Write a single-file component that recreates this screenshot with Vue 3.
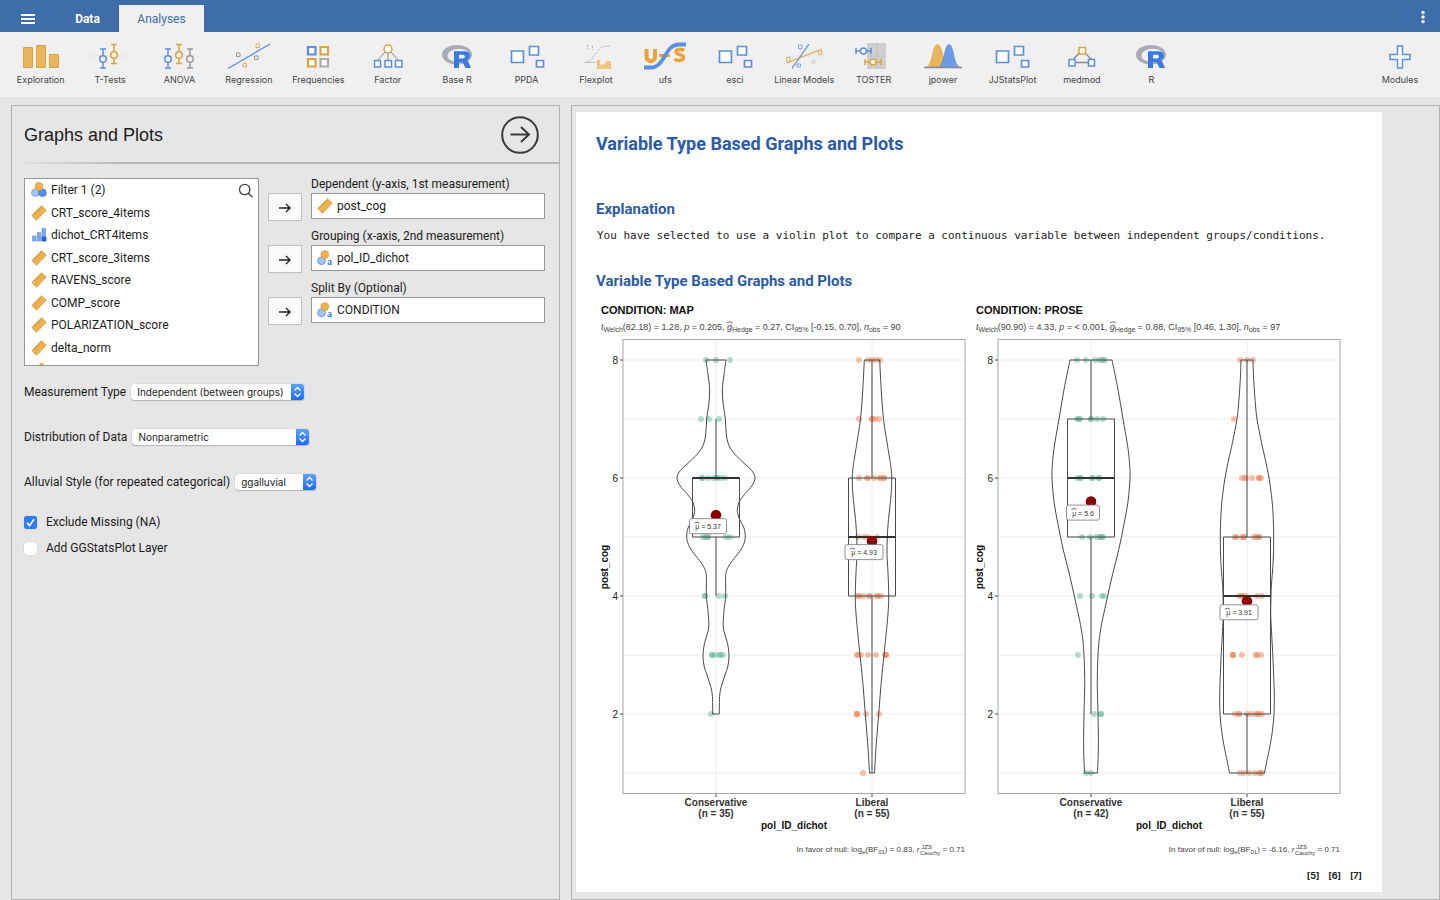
<script setup>
import { ref } from 'vue'

const tools = [
  { id: 'exploration', label: 'Exploration' },
  { id: 'ttests', label: 'T-Tests' },
  { id: 'anova', label: 'ANOVA' },
  { id: 'regression', label: 'Regression' },
  { id: 'frequencies', label: 'Frequencies' },
  { id: 'factor', label: 'Factor' },
  { id: 'r', label: 'Base R' },
  { id: 'squares', label: 'PPDA' },
  { id: 'flexplot', label: 'Flexplot' },
  { id: 'ufs', label: 'ufs' },
  { id: 'squares', label: 'esci' },
  { id: 'linear', label: 'Linear Models' },
  { id: 'toster', label: 'TOSTER' },
  { id: 'jpower', label: 'jpower' },
  { id: 'squares', label: 'JJStatsPlot' },
  { id: 'medmod', label: 'medmod' },
  { id: 'r', label: 'R' },
]

const variables = [
  { name: 'Filter 1 (2)', type: 'nominal' },
  { name: 'CRT_score_4items', type: 'scale' },
  { name: 'dichot_CRT4items', type: 'ordinal' },
  { name: 'CRT_score_3items', type: 'scale' },
  { name: 'RAVENS_score', type: 'scale' },
  { name: 'COMP_score', type: 'scale' },
  { name: 'POLARIZATION_score', type: 'scale' },
  { name: 'delta_norm', type: 'scale' },
  { name: '', type: 'scale' },
]

const targets = [
  { id: 'dep', label: 'Dependent (y-axis, 1st measurement)', value: 'post_cog', type: 'scale' },
  { id: 'group', label: 'Grouping (x-axis, 2nd measurement)', value: 'pol_ID_dichot', type: 'text' },
  { id: 'split', label: 'Split By (Optional)', value: 'CONDITION', type: 'text' },
]

const measurement = ref('Independent (between groups)')
const distribution = ref('Nonparametric')
const alluvial = ref('ggalluvial')
const excludeMissing = ref(true)
const addLayer = ref(false)

// Vertical position of a post_cog score inside a plot.
const yOf = (v) => 60 + (8 - v) * 59

// Mirrored density outline from [score, half width] pairs.
function violin(cx, profile) {
  const side = (sign, pts) => {
    const p = pts.map(([v, w]) => [cx + sign * w, yOf(v)])
    let d = ''
    for (let i = 0; i < p.length - 1; i++) {
      const a = p[Math.max(i - 1, 0)], b = p[i], c = p[i + 1], e = p[Math.min(i + 2, p.length - 1)]
      const n = [b[0] + (c[0] - a[0]) / 6, b[1] + (c[1] - a[1]) / 6, c[0] - (e[0] - b[0]) / 6, c[1] - (e[1] - b[1]) / 6, c[0], c[1]]
      d += 'C' + n.map((x) => x.toFixed(2)).join(' ')
    }
    return d
  }
  const [v0, w0] = profile[0]
  const [v1, w1] = profile[profile.length - 1]
  return `M${cx + w0} ${yOf(v0)}` + side(1, profile) + `L${cx - w1} ${yOf(v1)}` + side(-1, [...profile].reverse()) + 'Z'
}

const plots = [
  {
    title: 'CONDITION: MAP', t: '(82.18) = 1.28, ', p: ' = 0.205, ', g: ' = 0.27, CI', ci: ' [-0.15, 0.70], ', n: ' = 90', hat: 135, bf: ') = 0.83, ',
    groups: [
      {
        name: 'Conservative', n: 35, x: 124, color: '#66b99a', q: [5, 6, 6], lo: 4, hi: 7, mean: 5.37, labelW: 37,
        profile: [[8, 10], [7.75, 8], [7.5, 6.3], [7.25, 7.2], [7, 9.4], [6.75, 10.2], [6.55, 13], [6.4, 19], [6.25, 28], [6.12, 36], [6, 39], [5.87, 36], [5.72, 28.5], [5.6, 23.3], [5.45, 21.3], [5.3, 23.5], [5.15, 28], [5, 29.3], [4.87, 27.5], [4.75, 23.5], [4.6, 16.5], [4.45, 11], [4.3, 9.6], [4, 9.7], [3.8, 8.3], [3.55, 7.2], [3.4, 8], [3.2, 11.5], [3, 13], [2.82, 12], [2.65, 8.8], [2.45, 5], [2.3, 3.6], [2.1, 3.3], [2, 3.3]],
        dots: [[8, -10, 0, 14], [7, -15, -7, 3], [6, -14, -14, -8, -3, 1, 1, 5, 9], [5, -13, -10, -8, -8, 10, 14], [4, -11, -11, 3, 9], [3, -4, -4, -1, 4, 4, 7], [2, -5]],
      },
      {
        name: 'Liberal', n: 55, x: 280, color: '#ee8459', q: [4, 5, 6], lo: 1, hi: 8, mean: 4.93, labelW: 38,
        profile: [[8, 7.7], [7.5, 9.2], [7, 11.5], [6.5, 16], [6.2, 18.8], [6, 19.7], [5.7, 19], [5.3, 16.5], [5, 15.3], [4.7, 15], [4.4, 16], [4, 16.7], [3.7, 16], [3.3, 13.8], [3, 12], [2.5, 9], [2, 6.7], [1.5, 4.3], [1, 2.5]],
        dots: [[8, -13, -4, 0, 4, 8], [7, -13, 0, 0, 3, 7], [6, -13, -5, -4, 2, 8, 8, 12, 12], [5, -14, -8, -4, 5], [4, -14, -13, -9, -3, -2, 5, 6, 9], [3, -15, -14, -11, -4, 4, 13, 14, 14], [2, -15, -15, -15, -6, 7], [1, -9]],
      },
    ],
  },
  {
    title: 'CONDITION: PROSE', t: '(90.90) = 4.33, ', p: ' = < 0.001, ', g: ' = 0.88, CI', ci: ' [0.46, 1.30], ', n: ' = 97', hat: 143, bf: ') = -6.16, ',
    groups: [
      {
        name: 'Conservative', n: 42, x: 124, color: '#66b99a', q: [5, 6, 7], lo: 2, hi: 8, mean: 5.6, labelW: 33,
        profile: [[8, 21], [7.5, 27], [7, 32], [6.5, 37], [6.2, 38.7], [6, 39], [5.6, 37], [5.2, 32.8], [4.78, 27.7], [4.4, 22], [4, 16.7], [3.6, 11.5], [3.3, 8.5], [3, 7], [2.6, 6.3], [2.3, 6.5], [2, 7], [1.6, 7.4], [1.3, 7.2], [1, 6.5]],
        dots: [[8, -14, -5, 4, 8, 11, 12, 14], [7, -14, -12, -11, 0, 0, 6, 12], [6, -14, -11, -10, 1, 2, 8, 8], [5, -9, -1, 5, 9, 9, 11, 12], [4, -11, 1, 11, 13], [3, -13], [2, 3, 10, 10], [1, -5, 0]],
      },
      {
        name: 'Liberal', n: 55, x: 280, color: '#ee8459', q: [2, 4, 5], lo: 1, hi: 8, mean: 3.91, labelW: 38,
        profile: [[8, 6], [7.7, 6.6], [7.3, 8.2], [7, 10], [6.6, 14.5], [6.3, 18.5], [6, 22], [5.7, 24.5], [5.4, 26], [5, 26.7], [4.6, 26.2], [4.2, 24.5], [4, 24], [3.7, 23.7], [3.4, 24.5], [3, 25.8], [2.6, 26.8], [2.3, 27.3], [2, 27], [1.7, 25.3], [1.4, 22.3], [1.2, 19.8], [1, 17.5]],
        dots: [[8, -7, 0, 6], [7, -13], [6, -5, -2, -1, 5, 12, 12, 14], [5, -12, -11, -5, -3, -3, 7, 9, 12, 12], [4, -8, -5, -5, -1, 10, 15], [3, -14, -14, -14, -5, 9, 10, 14], [2, -12, -8, -8, 0, 4, 9, 10, 12, 15], [1, -7, -3, 2, 8, 13, 13, 15]],
      },
    ],
  },
]
</script>

<template>
  <div class="app">
    <header class="topbar">
      <button class="menu" aria-label="Menu">
        <svg width="16" height="12" viewBox="0 0 16 12"><path d="M1 2h14M1 6h14M1 10h14" stroke="#fff" stroke-width="2" /></svg>
      </button>
      <button class="tab data">Data</button>
      <button class="tab active">Analyses</button>
      <button class="more" aria-label="More">
        <svg width="6" height="14" viewBox="0 0 6 14" fill="#fff"><circle cx="3" cy="2.4" r="1.7" /><circle cx="3" cy="7" r="1.7" /><circle cx="3" cy="11.6" r="1.7" /></svg>
      </button>
    </header>

    <nav class="ribbon">
      <div class="tools">
        <button v-for="t in tools" :key="t.label" class="tool">
          <svg width="48" height="32" viewBox="0 0 48 32" fill="none">
            <g v-if="t.id === 'exploration'" fill="#e9b45c" stroke="#dfa23c">
              <path d="M6.500 7.500h9v20h-9zM19.500 5.500h9v22h-9zM32.500 14.500h9v13h-9z" />
            </g>
            <g v-else-if="t.id === 'ttests'">
              <path d="M3 16h42" stroke="#ddd" stroke-dasharray="2 1" />
              <path d="M14 9h6M17 9v19M14 28h6" stroke="#5b8fe0" stroke-width="1.500" />
              <circle cx="17" cy="19" r="3.300" fill="#f0f0f0" stroke="#5b8fe0" stroke-width="1.500" />
              <path d="M25 4.500h6M28 4.500v19M25 23.500h6" stroke="#dfa23c" stroke-width="1.500" />
              <circle cx="28" cy="15" r="3.300" fill="#f0f0f0" stroke="#dfa23c" stroke-width="1.500" />
            </g>
            <g v-else-if="t.id === 'anova'">
              <path d="M5 16h40" stroke="#ddd" stroke-dasharray="2 1" />
              <path d="M9 9h6M12 9v19M9 28h6" stroke="#5b8fe0" stroke-width="1.500" />
              <circle cx="12" cy="19" r="3.300" fill="#f0f0f0" stroke="#5b8fe0" stroke-width="1.500" />
              <path d="M20 4.500h6M23 4.500v19M20 23.500h6" stroke="#dfa23c" stroke-width="1.500" />
              <circle cx="23" cy="15" r="3.300" fill="#f0f0f0" stroke="#dfa23c" stroke-width="1.500" />
              <path d="M31 9h6M34 9v19M31 28h6" stroke="#999" stroke-width="1.500" />
              <circle cx="34" cy="19" r="3.300" fill="#f0f0f0" stroke="#999" stroke-width="1.500" />
            </g>
            <g v-else-if="t.id === 'regression'">
              <path d="M3 16h42" stroke="#ddd" stroke-dasharray="2 1" />
              <path d="M3 28.500L45 4" stroke="#5b8fe0" stroke-width="1.300" />
              <path d="M31 4h3.500v3.500H31zM18 23.500h3.500V27H18z" stroke="#e0ac56" />
              <path d="M11.500 13H15v3.500h-3.500zM29.500 16H33v3.500h-3.500z" stroke="#999" />
            </g>
            <g v-else-if="t.id === 'frequencies'" fill="#fff" stroke-width="2.200">
              <path d="M14 7h7.500v7.500H14z" stroke="#5b8fe0" /><path d="M26.500 7H34v7.500h-7.500z" stroke="#dfa23c" />
              <path d="M14 19h7.500v7.500H14z" stroke="#dfa23c" /><path d="M26.500 19H34v7.500h-7.500z" stroke="#aaa" />
            </g>
            <g v-else-if="t.id === 'factor'">
              <path d="M21 12l-7 8M24 13v7M27 12l7 8" stroke="#888" />
              <circle cx="24" cy="9" r="4" fill="#fff" stroke="#dfa23c" stroke-width="1.500" />
              <path d="M10.500 20.500h6v6.500h-6zM21 20.500h6.500v6.500H21zM31.500 20.500h6.500v6.500h-6.500z" fill="#fff" stroke="#5b8fe0" stroke-width="1.500" />
            </g>
            <g v-else-if="t.id === 'r'">
              <path fill-rule="evenodd" fill="#a9abb3" d="M24 5c8.300 0 15 4.300 15 9.800S32.300 24.500 24 24.500 9 20.300 9 14.800 15.700 5 24 5zM26 8.800c-6.400 0-11.400 3-11.400 7s5 6 11.400 6 10.500-2 10.500-6-4.100-7-10.500-7z" />
              <path fill-rule="evenodd" fill="#3b7be0" d="M21 11.200h10c4 0 6 1.600 6 4.600 0 2.400-1.400 3.800-3.400 4.400 1 .4 1.500 1 2 2L38 28h-5.500l-2.400-4.700c-.5-1-1-1.300-2-1.300H26v6H21zM26 14.700v3.700h3.500c1.600 0 2.400-.6 2.400-1.900 0-1.200-.8-1.800-2.400-1.800z" />
            </g>
            <g v-else-if="t.id === 'squares'" fill="#fff" stroke="#5b8fe0" stroke-width="1.700">
              <path d="M8.500 11h12v11.500h-12zM26.500 6.500h9v8.500h-9zM33.500 20.500h7V27h-7z" />
            </g>
            <g v-else-if="t.id === 'flexplot'">
              <path d="M15.500 5v4M20.500 6v4" stroke="#c8aa9a" stroke-dasharray="2 1" />
              <path d="M12 22.500h12M14 22c6-1 6-5 10-9s4-7 14-7" stroke="#c4c4c4" />
              <path d="M25 29v-9h3v4l3 1 4-4h4v8z" fill="#f0c67c" />
            </g>
            <g v-else-if="t.id === 'ufs'">
              <path d="M5.500 9v8c0 5.500 8.500 5.500 8.500 0V9" stroke="#e8a33a" stroke-width="4" />
              <path d="M18 15.500h11" stroke="#e8a33a" stroke-width="3" />
              <path d="M43 10.500c-3-2-8-1-8 1.500 0 3 7.500 2 7.500 5.500 0 3-6 4-9 1.500" stroke="#e8a33a" stroke-width="3.500" />
              <path d="M3 27.500h6c16 0 14-23 29-23h7" stroke="#5b8fe0" stroke-width="3.800" />
            </g>
            <g v-else-if="t.id === 'linear'">
              <path d="M6 16h38" stroke="#ddd" stroke-dasharray="2 1" />
              <path d="M7 23L42 9" stroke="#dfa84a" stroke-width="1.300" /><path d="M12 28.500L29 4" stroke="#5b8fe0" stroke-width="1.300" />
              <path d="M6.500 17.500H10V21H6.500zM38.500 11H42v3.500h-3.500z" stroke="#dfb265" />
              <path d="M18.500 5H22v3.500h-3.500zM17 24h3.500v3H17z" stroke="#7aa5e6" /><path d="M32 20h3v3h-3z" stroke="#ccc" />
            </g>
            <g v-else-if="t.id === 'toster'">
              <path d="M17 3h19v26H17z" fill="#cfcfcf" /><path d="M17 16h19M27 3v26" stroke="#bbb" stroke-dasharray="2 1" />
              <path d="M6 11h15M6 8v6M21 8v6" stroke="#5b8fe0" stroke-width="1.500" /><circle cx="13.500" cy="11" r="3" fill="#fff" stroke="#5b8fe0" stroke-width="1.500" />
              <path d="M15 22h16M15 19v6M31 19v6" stroke="#dfa23c" stroke-width="1.500" /><circle cx="23" cy="22" r="3" fill="#fff" stroke="#dfa23c" stroke-width="1.500" />
            </g>
            <g v-else-if="t.id === 'jpower'">
              <path d="M7 27.500c7-2 6-23 11.500-23s5 21 12 23z" fill="#e9b45c" stroke="#dfa23c" stroke-width=".6" />
              <path d="M19 27.500c7-2 6-23 11-23s4 21 11 23z" fill="#6a9be6" stroke="#4a80d0" stroke-width=".6" />
              <path d="M5 27.500h38" stroke="#888" stroke-width="1.300" />
            </g>
            <g v-else-if="t.id === 'medmod'">
              <path d="M21 13l-6 7M27 13l7 7M17 22.500h14" stroke="#888" stroke-width="1.300" />
              <path d="M21 7.500h6.500V14H21z" fill="#fff" stroke="#dfa23c" stroke-width="1.500" />
              <path d="M11 19.500h6V26h-6zM30.500 19.500h6V26h-6z" fill="#fff" stroke="#5b8fe0" stroke-width="1.500" />
            </g>
          </svg>
          <span>{{ t.label }}</span>
        </button>
      </div>
      <button class="tool modules">
        <svg width="48" height="32" viewBox="0 0 48 32"><path d="M21.500 6h5v8.500H34v5h-7.500V28h-5v-8.500H14v-5h7.500z" fill="#fff" stroke="#5b8fe0" stroke-width="1.500" /></svg>
        <span>Modules</span>
      </button>
    </nav>

    <main class="work">
      <section class="options">
        <div class="head">
          <h1>Graphs and Plots</h1>
          <button class="go" aria-label="Hide options">
            <svg width="40" height="40" viewBox="0 0 40 40" fill="none" stroke="#3a3a3a" stroke-width="2"><circle cx="20" cy="20" r="17.800" /><path d="M10.500 19.500h18M21 12l8 7.500-8 7.500" /></svg>
          </button>
        </div>

        <div class="assign">
          <div class="varbox">
            <ul>
              <li v-for="v in variables" :key="v.name">
                <svg width="16" height="16" viewBox="0 0 16 16">
                  <g v-if="v.type === 'scale'"><path d="M.8 10.500L10.500.8l4.700 4.400-9.700 10z" fill="#eeb150" stroke="#d9952f" stroke-width=".8" /><path d="M3.500 8l1.500 1.500M5.500 6l1 1M7.300 4.200l1.500 1.500M9.200 2.300l1 1" stroke="#b97c1e" stroke-width=".7" /></g>
                  <g v-else-if="v.type === 'nominal'"><circle cx="4.300" cy="10.800" r="3.800" fill="#a4c4f4" stroke="#6c98dc" stroke-width=".7" /><circle cx="11.500" cy="10.800" r="3.800" fill="#5b8fe0" stroke="#3f74c8" stroke-width=".7" /><circle cx="8" cy="4.500" r="3.900" fill="#eeb150" stroke="#d9952f" stroke-width=".7" /></g>
                  <g v-else><path d="M1.500 9h3.500v5H1.500zM6.200 5.500h3.500V14H6.200zM11 1.500h3.500V14H11z" fill="#7ca9ee" stroke="#5b8fe0" stroke-width=".6" /><rect x="10.500" y="9.500" width="5" height="5" rx="1" fill="#2f66c4" /></g>
                </svg>
                <span>{{ v.name }}</span>
              </li>
            </ul>
            <button class="search" aria-label="Search variables">
              <svg width="16" height="16" viewBox="0 0 16 16" fill="none" stroke="#444" stroke-width="1.300"><circle cx="6.700" cy="6.500" r="5.200" /><path d="M10.500 10.300l4 4" /></svg>
            </button>
          </div>

          <div class="targets">
            <div v-for="t in targets" :key="t.id" class="target">
              <button class="move" :aria-label="'Assign to ' + t.label">
                <svg width="14" height="14" viewBox="0 0 14 14" fill="none" stroke="#222" stroke-width="1.400"><path d="M1 8h10.500M8 4l4 4-4 4" /></svg>
              </button>
              <label :for="t.id">{{ t.label }}</label>
              <div class="field">
                <svg width="16" height="16" viewBox="0 0 16 16">
                  <g v-if="t.type === 'scale'"><path d="M.8 10.500L10.500.8l4.700 4.400-9.700 10z" fill="#eeb150" stroke="#d9952f" stroke-width=".8" /><path d="M3.500 8l1.500 1.500M5.500 6l1 1M7.300 4.200l1.500 1.500M9.200 2.300l1 1" stroke="#b97c1e" stroke-width=".7" /></g>
                  <g v-else><circle cx="4.500" cy="10.800" r="3.800" fill="#a4c4f4" stroke="#5b8fe0" stroke-width=".9" /><circle cx="7.800" cy="4.600" r="3.900" fill="#eeb150" stroke="#d9952f" stroke-width=".7" /><text x="10" y="15" class="type-a">a</text></g>
                </svg>
                <input :id="t.id" type="text" :value="t.value" readonly />
              </div>
            </div>
          </div>
        </div>

        <div class="choice">
          <label for="measure">Measurement Type</label>
          <span class="select w-measure">
            <select id="measure" v-model="measurement"><option>Independent (between groups)</option><option>Dependent (repeated)</option></select>
            <svg width="13" height="16" viewBox="0 0 13 16"><path d="M3.500 6.500l3-3 3 3M3.500 9.500l3 3 3-3" /></svg>
          </span>
        </div>
        <div class="choice">
          <label for="dist">Distribution of Data</label>
          <span class="select w-dist">
            <select id="dist" v-model="distribution"><option>Nonparametric</option><option>Parametric</option></select>
            <svg width="13" height="16" viewBox="0 0 13 16"><path d="M3.500 6.500l3-3 3 3M3.500 9.500l3 3 3-3" /></svg>
          </span>
        </div>
        <div class="choice">
          <label for="alluv">Alluvial Style (for repeated categorical)</label>
          <span class="select w-alluv">
            <select id="alluv" v-model="alluvial"><option>ggalluvial</option><option>easyalluvial</option></select>
            <svg width="13" height="16" viewBox="0 0 13 16"><path d="M3.500 6.500l3-3 3 3M3.500 9.500l3 3 3-3" /></svg>
          </span>
        </div>
        <div class="checks">
          <label><input v-model="excludeMissing" type="checkbox" />Exclude Missing (NA)</label>
          <label><input v-model="addLayer" type="checkbox" />Add GGStatsPlot Layer</label>
        </div>
      </section>

      <section class="results">
        <article class="paper">
          <h2>Variable Type Based Graphs and Plots</h2>
          <h3>Explanation</h3>
          <p class="mono">You have selected to use a violin plot to compare a continuous variable between independent groups/conditions.</p>
          <h3>Variable Type Based Graphs and Plots</h3>
          <div class="plots">
            <svg v-for="pl in plots" :key="pl.title" class="plot" viewBox="0 0 375 570">
              <text x="9" y="14" class="p-title">{{ pl.title }}</text>
              <text x="9" y="30" class="p-sub"><tspan class="i">t</tspan><tspan class="s" dy="2">Welch</tspan><tspan dy="-2">{{ pl.t }}</tspan><tspan class="i">p</tspan>{{ pl.p }}<tspan class="i">g</tspan><tspan class="s" dy="2">Hedge</tspan><tspan dy="-2">{{ pl.g }}</tspan><tspan class="s" dy="2">95%</tspan><tspan dy="-2">{{ pl.ci }}</tspan><tspan class="i">n</tspan><tspan class="s" dy="2">obs</tspan><tspan dy="-2">{{ pl.n }}</tspan></text>
              <path :d="`M${pl.hat} 23q3-3 6 0`" fill="none" stroke="#555" stroke-width=".8" />

              <path v-for="v in 8" :key="'g' + v" :d="`M31 ${yOf(v)}H373`" stroke="#ececec" />
              <path v-for="g in pl.groups" :key="'v' + g.name" :d="`M${g.x} 40V493`" stroke="#ececec" />

              <g v-for="g in pl.groups" :key="g.name">
                <template v-for="row in g.dots" :key="row[0]">
                  <circle v-for="(dx, i) in row.slice(1)" :key="i" :cx="g.x + dx" :cy="yOf(row[0])" r="3" :fill="g.color" fill-opacity=".5" />
                </template>
                <g fill="none" stroke="#4a4a4a">
                  <path :d="violin(g.x, g.profile)" />
                  <path :d="`M${g.x - 23.500} ${yOf(g.q[2])}h47V${yOf(g.q[0])}h-47zM${g.x} ${yOf(g.q[2])}V${yOf(g.hi)}M${g.x} ${yOf(g.q[0])}V${yOf(g.lo)}`" />
                  <path :d="`M${g.x - 23.500} ${yOf(g.q[1])}h47`" stroke="#333" stroke-width="2" />
                </g>
                <circle :cx="g.x" :cy="yOf(g.mean)" r="5.300" fill="#8b0000" />
                <rect :x="g.x - 8 - g.labelW / 2" :y="yOf(g.mean) + 3.500" :width="g.labelW" height="15" rx="2" fill="#fff" stroke="#777" stroke-width=".8" />
                <text :x="g.x - 8" :y="yOf(g.mean) + 14" text-anchor="middle" class="p-mean">μ = {{ g.mean }}</text>
                <path :d="`M${g.x - 3 - g.labelW / 2} ${yOf(g.mean) + 8}q2.500-2.500 5 0`" fill="none" stroke="#444" stroke-width=".8" />
                <path :d="`M${g.x} 493v4`" stroke="#444" />
                <text :x="g.x" y="506" text-anchor="middle" class="p-cat">{{ g.name }}</text>
                <text :x="g.x" y="517" text-anchor="middle" class="p-cat">(n = {{ g.n }})</text>
              </g>

              <rect x="31" y="39.500" width="342" height="454" fill="none" stroke="#a8a8a8" />
              <g v-for="v in [2, 4, 6, 8]" :key="v">
                <path :d="`M28 ${yOf(v)}h3`" stroke="#444" />
                <text x="26" :y="yOf(v) + 4" text-anchor="end" class="p-tick">{{ v }}</text>
              </g>
              <text transform="translate(16 267) rotate(-90)" text-anchor="middle" class="p-axis">post_cog</text>
              <text x="202" y="529" text-anchor="middle" class="p-axis">pol_ID_dichot</text>
              <text x="373" y="552" text-anchor="end" class="p-cap">In favor of null: log<tspan class="s" dy="2">e</tspan><tspan dy="-2">(BF</tspan><tspan class="s" dy="2">01</tspan><tspan dy="-2">{{ pl.bf }}</tspan><tspan class="i">r</tspan><tspan class="s i" dx="2" dy="-3">JZS</tspan><tspan class="s" dx="-12" dy="6">Cauchy</tspan><tspan dy="-3"> = 0.71</tspan></text>
            </svg>
          </div>
          <div class="refs"><a href="#5">[5]</a><a href="#6">[6]</a><a href="#7">[7]</a></div>
        </article>
      </section>
    </main>
  </div>
</template>

<style>
body { margin: 0; background: #e6e6e6; }
</style>

<style scoped>
.app { min-height: 100vh; display: flex; flex-direction: column; font-family: Roboto, "Liberation Sans", sans-serif; font-size: 12px; color: #1c1c1c; background: #e6e6e6; }
* { box-sizing: border-box; }
button { border: 0; padding: 0; background: none; font: inherit; color: inherit; }
h1, h2, h3, p, ul { margin: 0; padding: 0; }
svg { flex: none; }

.topbar { display: flex; align-items: flex-end; height: 32px; background: #3e6da9; }
.menu { width: 56px; height: 27px; }
.tab { height: 27px; font-size: 12px; color: #fff; }
.data { width: 63px; font-weight: 700; }
.active { width: 85px; background: #f0f0f0; color: #3e6da9; }
.more { width: 34px; height: 30px; margin-left: auto; }
.menu svg, .more svg { display: block; margin: auto; }

.ribbon { display: flex; justify-content: space-between; height: 67px; padding: 8px 5px 0 6px; background: #f0f0f0; border-bottom: 1px solid #dadada; }
.tools { display: grid; grid-template-columns: repeat(17, minmax(0, 1fr)); width: 1180px; }
.tool { display: flex; flex-direction: column; align-items: center; gap: 1px; font: 9px/13px Inter, sans-serif; color: #444; white-space: nowrap; }
.modules { width: 70px; }

.work { flex: 1; display: grid; grid-template-columns: 549px minmax(0, 1fr); gap: 11px; padding: 6px 0 0 11px; }
.options, .results { border: 1px solid #b2b2b2; }
.head { display: flex; justify-content: space-between; align-items: center; height: 58px; padding: 2px 19px 0 12px; border-bottom: 2px solid; border-image: linear-gradient(90deg, #e6e6e6, #b8b8b8 20%) 1; }
h1 { font: 400 18px "Liberation Sans", Arial, sans-serif; }
.go svg { display: block; }

.assign { display: flex; gap: 9px; padding: 14px 14px 0 12px; }
.varbox { position: relative; width: 235px; height: 188px; border: 1px solid #979797; background: #fff; overflow: hidden; }
.varbox ul { list-style: none; padding: 0 6px; }
.varbox li { display: flex; align-items: center; gap: 4px; height: 22px; margin-bottom: 1px; }
.varbox li:nth-child(even) { margin-bottom: 0; }
.search { position: absolute; top: 4px; right: 4px; }
.search svg { display: block; }
.targets { flex: 1; display: flex; flex-direction: column; }
.target { display: grid; grid-template: 15px 26px / 34px 1fr; column-gap: 9px; margin-bottom: 11px; }
.target label { grid-column: 2; grid-row: 1; line-height: 13px; }
.move { grid-column: 1; grid-row: 2; height: 28px; border: 1px solid #c0c0c0; background: #fafafa; }
.move svg { display: block; margin: auto; }
.field { grid-column: 2; grid-row: 2; display: flex; align-items: center; gap: 4px; padding: 0 5px; border: 1px solid #979797; background: #fff; }
.field input { flex: 1; min-width: 0; border: 0; padding: 0; font: inherit; color: inherit; background: none; outline: 0; }
.type-a { font: 700 10px "Liberation Serif", serif; fill: #4a7fe0; }

.choice { display: flex; align-items: center; gap: 5px; height: 18px; margin: 17px 12px 27px; }
.choice + .choice { margin-top: 0; }
.select { position: relative; display: flex; height: 16px; }
.select select { appearance: none; width: 100%; padding: 0 16px 0 6px; border: 0; border-radius: 3px; background: #fff; box-shadow: 0 0 1px #888, 0 1px 1px #bbb; font: 400 10px Inter, sans-serif; color: inherit; }
.select svg { position: absolute; top: 0; right: 0; border-radius: 0 3px 3px 0; background: linear-gradient(#5ea2fb, #1a6cf5); fill: none; stroke: #fff; stroke-width: 1.300; pointer-events: none; }
.w-measure { width: 173px; }
.w-dist { width: 177px; }
.w-alluv { width: 81px; }
.checks { display: flex; flex-direction: column; gap: 8px; padding: 0 12px; margin-top: -5px; }
.checks label { display: flex; align-items: center; gap: 9px; height: 18px; }
.checks input { appearance: none; width: 13px; height: 13px; margin: 0; border-radius: 3px; background: #fff; box-shadow: 0 0 1px #999; }
.checks input:checked { background: #2f7cf6 url("data:image/svg+xml,%3Csvg xmlns='http://www.w3.org/2000/svg' viewBox='0 0 13 13'%3E%3Cpath d='M3 6.800l2.500 3L10 3.300' fill='none' stroke='%23fff' stroke-width='1.600'/%3E%3C/svg%3E"); }

.results { padding: 6px 4px; }
.paper { max-width: 806px; padding: 20px 20px 10px; background: #fff; }
h2, h3 { color: #2a5ba6; font-family: Roboto, "Liberation Sans", sans-serif; font-weight: 700; }
h2 { font-size: 18px; line-height: 24px; margin-bottom: 43px; }
h3 { font-size: 15px; line-height: 20px; }
.mono { padding: 8px 1px 26px; font: 11px/18px "DejaVu Sans Mono", monospace; color: #222; white-space: nowrap; }
.plots { display: grid; grid-template-columns: 1fr 1fr; width: 100%; max-width: 750px; margin: 9px 0 0 -4px; }
.plot { display: block; width: 100%; font-family: "Liberation Sans", Arial, sans-serif; }
.p-title { font-size: 11px; font-weight: 700; fill: #111; }
.p-sub { font-size: 9px; fill: #444; white-space: pre; }
.p-cap { font-size: 8px; fill: #444; white-space: pre; }
.i { font-style: italic; }
.p-sub .s { font-size: 7px; }
.p-cap .s { font-size: 6px; }
.p-mean { font-size: 7px; fill: #333; }
.p-cat { font-size: 10px; font-weight: 700; fill: #333; }
.p-tick { font-size: 10px; font-weight: 400; fill: #222; }
.p-axis { font-size: 10px; font-weight: 700; fill: #111; }
.refs { display: flex; justify-content: flex-end; gap: 9px; font: 700 9px/12px Inter, sans-serif; }
.refs a { color: #222; text-decoration: none; }
</style>
